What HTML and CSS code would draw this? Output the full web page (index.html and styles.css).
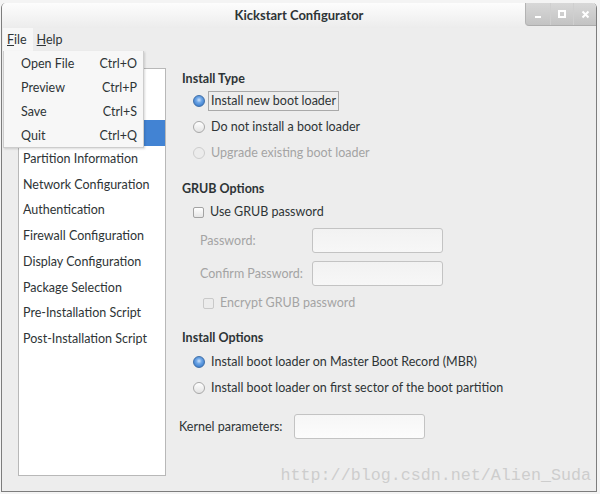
FILE: index.html
```html
<!DOCTYPE html>
<html lang="en">
<head>
    <meta charset="UTF-8">
    <title>Kickstart Configurator</title>
    <link rel="stylesheet" href="styles.css">
</head>
<body>
    <div class="window">
        <div class="titlebar">
            <span class="title">Kickstart Configurator</span>
            <div class="wm-buttons">
                <div class="wm-btn">
                    <svg width="8" height="8" viewBox="0 0 8 8"><rect x="1" y="6" width="6" height="2" fill="#fff"/></svg>
                </div>
                <div class="wm-btn">
                    <svg width="8" height="8" viewBox="0 0 8 8"><rect x="1" y="1" width="6" height="6" fill="none" stroke="#fff" stroke-width="2"/></svg>
                </div>
                <div class="wm-btn">
                    <svg width="9" height="9" viewBox="0 0 9 9"><path d="M1.5 1.5 L7.5 7.5 M7.5 1.5 L1.5 7.5" stroke="#fff" stroke-width="2"/></svg>
                </div>
            </div>
        </div>

        <div class="menubar">
            <span class="menu-item open"><u>F</u>ile</span>
            <span class="menu-item"><u>H</u>elp</span>
        </div>

        <div class="main">
            <ul class="nav">
                <li>Basic Configuration</li>
                <li>Installation Method</li>
                <li class="selected">Boot Loader Options</li>
                <li>Partition Information</li>
                <li>Network Configuration</li>
                <li>Authentication</li>
                <li>Firewall Configuration</li>
                <li>Display Configuration</li>
                <li>Package Selection</li>
                <li>Pre-Installation Script</li>
                <li>Post-Installation Script</li>
            </ul>

            <div class="panel">
                <div class="section-title">Install Type</div>
                <div class="row option">
                    <span class="radio checked"></span>
                    <span class="label focused">Install new boot loader</span>
                </div>
                <div class="row option">
                    <span class="radio"></span>
                    <span class="label">Do not install a boot loader</span>
                </div>
                <div class="row option disabled">
                    <span class="radio"></span>
                    <span class="label">Upgrade existing boot loader</span>
                </div>

                <div class="section-title grub">GRUB Options</div>
                <div class="row option">
                    <span class="check"></span>
                    <span class="label">Use GRUB password</span>
                </div>
                <div class="row field disabled pw">
                    <span class="field-label">Password:</span>
                    <span class="entry"></span>
                </div>
                <div class="row field disabled confirm">
                    <span class="field-label">Confirm Password:</span>
                    <span class="entry"></span>
                </div>
                <div class="row option disabled encrypt">
                    <span class="check"></span>
                    <span class="label">Encrypt GRUB password</span>
                </div>

                <div class="section-title opts">Install Options</div>
                <div class="row option mbr">
                    <span class="radio checked"></span>
                    <span class="label">Install boot loader on Master Boot Record (MBR)</span>
                </div>
                <div class="row option">
                    <span class="radio"></span>
                    <span class="label">Install boot loader on first sector of the boot partition</span>
                </div>

                <div class="row kernel">
                    <span class="kernel-label">Kernel parameters:</span>
                    <span class="entry"></span>
                </div>
            </div>
        </div>

        <div class="dropdown">
            <div class="dd-item"><span>Open File</span><span>Ctrl+O</span></div>
            <div class="dd-item"><span>Preview</span><span>Ctrl+P</span></div>
            <div class="dd-item"><span>Save</span><span>Ctrl+S</span></div>
            <div class="dd-item"><span>Quit</span><span>Ctrl+Q</span></div>
        </div>

        <div class="watermark">http://blog.csdn.net/Alien_Suda</div>
    </div>
</body>
</html>
```

FILE: styles.css
```css
body {
    margin: 0;
    background: #f4f4f4;
    font-family: Lato, "Noto Sans", sans-serif;
    font-size: 12.5px;
    color: #2e3436;
}

.window {
    position: relative;
    box-sizing: border-box;
    width: 596px;
    height: 489px;
    margin: 3px 0 0 1px;
    background: #ededed;
    border: 1px solid #7d7d7d;
    border-top: none;
    border-radius: 5px 5px 0 0;
    overflow: hidden;
    white-space: nowrap;
}

.titlebar {
    position: relative;
    height: 25px;
    display: flex;
    align-items: center;
    justify-content: center;
    background: linear-gradient(#fdfdfd, #ececec);
}

.title {
    font-size: 13px;
    font-weight: bold;
    margin-top: -1px;
}

.wm-buttons {
    position: absolute;
    top: 0;
    right: 0;
    display: flex;
    height: 22px;
    background: linear-gradient(#d8d8d8, #c3c3c3);
    border-left: 1px solid #b3b3b3;
    border-bottom: 1px solid #adadad;
    border-bottom-left-radius: 4px;
}

.wm-btn {
    width: 22px;
    display: flex;
    align-items: center;
    justify-content: center;
    border-left: 1px solid #cfcfcf;
}

.wm-btn:first-child {
    width: 24px;
    border-left: none;
}

.menubar {
    height: 24px;
    display: flex;
    align-items: center;
    padding-left: 1px;
}

.menu-item {
    height: 24px;
    line-height: 24px;
    padding: 0 5px 0 4px;
}

.menu-item.open {
    background: #f7f7f7;
    padding-right: 6px;
}

.main {
    display: flex;
    padding: 16px 0 0 16px;
}

.nav {
    list-style: none;
    margin: 0;
    padding: 0;
    box-sizing: border-box;
    width: 148px;
    height: 408px;
    background: #fff;
    border: 1px solid #b8b8b8;
}

.nav li {
    height: 25.7px;
    line-height: 25.7px;
    padding-left: 4px;
}

.nav li.selected {
    background: #4283d3;
    color: #fff;
}

.panel {
    margin-left: 13px;
    padding-top: 1px;
    flex: 1;
}

.section-title {
    font-weight: bold;
    height: 19px;
    line-height: 19px;
    padding-left: 3px;
}

.section-title.grub {
    margin-top: 13px;
    height: 20px;
    line-height: 20px;
}

.section-title.opts {
    margin-top: 12px;
    height: 20px;
    line-height: 20px;
}

.row {
    height: 26px;
    display: flex;
    align-items: center;
}

.option {
    padding-left: 14px;
}

.option.mbr {
    margin-top: 1px;
}

.label {
    margin-left: 3px;
    padding: 0 2px;
    line-height: 18px;
    border: 1px solid transparent;
}

.label.focused {
    border-color: #a9a9a9;
}

.disabled {
    color: #a4a4a4;
}

.radio {
    box-sizing: border-box;
    width: 12px;
    height: 12px;
    border-radius: 50%;
    border: 1px solid #a8a8a8;
    background: linear-gradient(#ffffff, #e3e3e3);
}

.radio.checked {
    border-color: #3f6fa8;
    background: radial-gradient(circle at 50% 40%, #cfe3fb 0, #6ea6e6 35%, #3b7dcd 80%);
}

.disabled .radio {
    border-color: #cdcdcd;
    background: #ececec;
}

.check {
    box-sizing: border-box;
    width: 11px;
    height: 11px;
    border: 1px solid #a3a3a3;
    border-radius: 2px;
    background: linear-gradient(#ffffff, #e6e6e6);
}

.disabled .check {
    border-color: #c9c9c9;
    background: #ececec;
}

.field {
    padding-left: 21px;
}

.field.pw {
    margin-top: 2px;
}

.field.confirm {
    margin-top: 7px;
}

.field-label {
    width: 112px;
}

.entry {
    box-sizing: border-box;
    width: 131px;
    height: 25px;
    border: 1px solid #c3c3c3;
    border-radius: 3px;
    background: linear-gradient(#f2f2f2, #f7f7f7);
}

.option.encrypt {
    margin-top: 4px;
    padding-left: 24px;
}

.kernel {
    margin-top: 12px;
}

.kernel-label {
    width: 115px;
}

.kernel .entry {
    background: linear-gradient(#f6f6f6, #fcfcfc);
}

.dropdown {
    position: absolute;
    left: 1px;
    top: 48px;
    width: 139px;
    background: #f7f7f7;
    border: 1px solid #cdcdcd;
    border-top: none;
    box-shadow: 1px 1px 2px rgba(0, 0, 0, 0.15);
}

.dd-item {
    height: 24px;
    display: flex;
    align-items: center;
    justify-content: space-between;
    padding: 0 6px 0 17px;
}

.watermark {
    position: absolute;
    right: 5px;
    bottom: 6px;
    font-family: "Liberation Mono", monospace;
    font-size: 16.7px;
    color: #cdcdcd;
}
```
